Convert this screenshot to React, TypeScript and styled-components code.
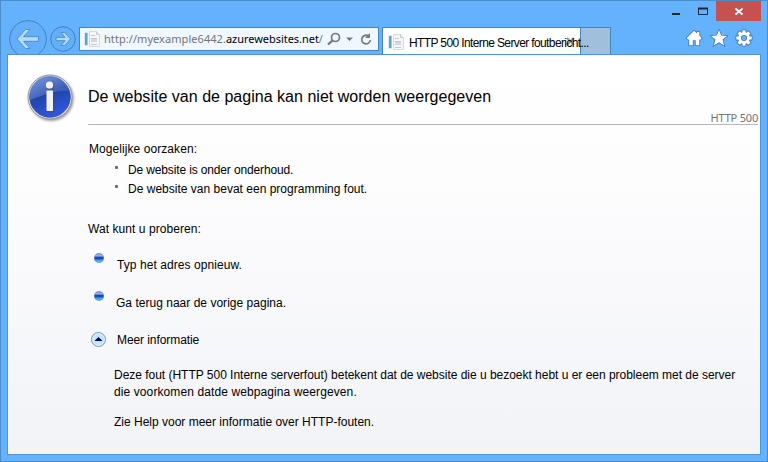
import React from "react";
import styled, { createGlobalStyle } from "styled-components";

const GlobalStyle = createGlobalStyle`
  *, *::before, *::after { box-sizing: border-box; }
  body { margin: 0; }
  p, h1, h2, ul { margin: 0; padding: 0; font-weight: normal; }
`;

const EDGE = "#4a8dc9";

const Window = styled.div`
  display: flex;
  flex-direction: column;
  width: 768px;
  height: 462px;
  padding: 0 6px 6px;
  overflow: hidden;
  background: #64b1fd;
  border: 1px solid ${EDGE};
  color: #000;
  font: 12px/16px "Liberation Sans", Arial, sans-serif;
`;

const CaptionBar = styled.div`
  display: flex;
  flex: none;
  justify-content: flex-end;
  height: 20px;
`;

const CaptionButton = styled.div<{ $width: number; $danger?: boolean }>`
  display: flex;
  width: ${(p) => p.$width}px;
  height: 20px;
  background: ${(p) => (p.$danger ? "#c75050" : "transparent")};
`;

const Toolbar = styled.div`
  display: flex;
  flex: none;
  align-items: flex-start;
  height: 34px;
  margin-top: -1px;
  padding-left: 2px;
`;

const BackButton = styled.svg`
  flex: none;
  width: 38px;
  height: 34px;
`;

const ForwardButton = styled.svg`
  flex: none;
  width: 26px;
  height: 26px;
  margin: 6px 3px 0;
`;

const AddressBar = styled.div`
  display: flex;
  flex: none;
  align-items: center;
  width: 300px;
  height: 24px;
  margin: 7px 3px 0 0;
  padding-left: 4px;
  background: #f0f7ff;
  border: 1px solid #4785bd;
`;

const DocumentSvg = styled.svg`
  flex: none;
  width: 16px;
  height: 16px;
`;

const Url = styled.span`
  width: 219px;
  margin: 0 4px 0 4px;
  overflow: hidden;
  color: #6f757b;
  font: 11px/16px "Noto Sans", sans-serif;
  letter-spacing: 0.06px;
  white-space: nowrap;
`;

const Domain = styled.span`
  color: #000;
  letter-spacing: -0.04px;
`;

const AddressTools = styled.svg`
  flex: none;
  width: 48px;
  height: 18px;
`;

const Tab = styled.div`
  display: flex;
  flex: none;
  align-items: center;
  position: relative;
  width: 199px;
  height: 27px;
  margin-top: 7px;
  padding: 1px 0 0 5px;
  background: #fff;
  border: 1px solid #4785bd;
  border-bottom: 0;
`;

const TabTitle = styled.span`
  position: relative;
  z-index: 1;
  margin: 2px 0 0 5px;
  letter-spacing: -0.62px;
  white-space: nowrap;
`;

const TabClose = styled.svg`
  position: absolute;
  top: 9px;
  right: 5px;
  width: 9px;
  height: 9px;
`;

const NewTab = styled.div`
  flex: none;
  width: 30px;
  height: 27px;
  margin-top: 7px;
  background: #9fbfdb;
  border: 1px solid #4785bd;
  border-width: 1px 1px 0 0;
`;

const Commands = styled.div`
  display: flex;
  gap: 7px;
  margin: 9px 8px 0 auto;
`;

const CommandIcon = styled.svg`
  width: 18px;
  height: 18px;
  fill: #fff;
  stroke: #4179aa;
  stroke-width: 1.6;
  paint-order: stroke;
`;

const Page = styled.main`
  display: flex;
  flex: 1;
  width: 754px;
  padding: 19px 2px 0 19px;
  background: linear-gradient(#fff, #fdfdfe 30%, #f2f3f7);
  border: 1px solid #4d95d8;
`;

const InfoIcon = styled.svg`
  flex: none;
  width: 50px;
  height: 50px;
  margin-right: 11px;
`;

const Content = styled.div`
  flex: 1;
`;

const Header = styled.header`
  display: flex;
  align-items: flex-end;
  justify-content: space-between;
  height: 51px;
  border-bottom: 1px solid #b3b7c6;
`;

const Title = styled.h1`
  font-size: 16px;
  line-height: 20px;
  letter-spacing: 0.02px;
  margin-bottom: 17px;
`;

const Status = styled.span`
  color: #737373;
  font: 11px/14px "Noto Sans", sans-serif;
  letter-spacing: -0.2px;
  margin-bottom: -1px;
`;

const Line = styled.p<{ $spacing?: number; $top?: number; $indent?: number }>`
  height: 16px;
  margin-top: ${(p) => p.$top ?? 0}px;
  padding-left: ${(p) => p.$indent ?? 0}px;
  letter-spacing: ${(p) => p.$spacing ?? 0}px;
  white-space: nowrap;
`;

const Causes = styled.ul`
  display: flex;
  flex-direction: column;
  gap: 3px;
  margin-top: 5px;
  list-style: none;
`;

const Cause = styled.li<{ $spacing: number }>`
  display: flex;
  height: 16px;
  letter-spacing: ${(p) => p.$spacing}px;
  white-space: nowrap;

  &::before {
    content: "";
    width: 3px;
    height: 3px;
    margin: 4px 10px 0 27px;
    background: #6b6b6b;
    border-radius: 1px;
  }
`;

const Action = styled.div<{ $top: number; $indent?: number; $spacing: number }>`
  display: flex;
  height: 16px;
  margin-top: ${(p) => p.$top}px;
  letter-spacing: ${(p) => p.$spacing}px;
  white-space: nowrap;

  & > span { margin-left: ${(p) => p.$indent ?? 11}px; }
`;

const Bullet = styled.i`
  width: 10px;
  height: 10px;
  margin: -4px 2px 0 6px;
  background: linear-gradient(#8b9bc0 0%, #a0b5e8 24%, #2042bc 42%, #1749c8 58%, #35a4e9 78%, #6dbdd9 100%);
  border: 1px solid rgba(110, 145, 180, 0.6);
  border-radius: 50%;
`;

const Toggle = styled.svg`
  width: 16px;
  height: 16px;
  margin: -1px 0 0 2px;
`;

function DocumentIcon() {
  return (
    <DocumentSvg viewBox="0 0 16 16">
      <path d="M5.500.5h7l3 3v12h-10z" fill="#f6f7f8" stroke="#d5d8dc" />
      <path d="M12.500.5v3h3" fill="#e6e8eb" stroke="#c9cdd2" />
      <path d="M0 1h4v14H0z" fill="#dcebf4" />
      <path d="M1 2h2.500v12H1z" fill="#5da4cc" />
      <path d="M7 4.500h4M7 7.500h6M7 10.500h6M7 13.500h6" stroke="#c5c9ce" />
      <path d="M7 8h6v3H7z" fill="#d3d7db" />
    </DocumentSvg>
  );
}

const CAUSES = [
  { text: "De website is onder onderhoud.", spacing: -0.14 },
  { text: "De website van bevat een programming fout.", spacing: 0.01 },
];

export default function App() {
  return (
    <>
      <GlobalStyle />
      <Window>
        <CaptionBar>
          <CaptionButton $width={27}>
            <svg width="27" height="20"><path d="M6 12h8v2H6z" fill="#1d2730" /></svg>
          </CaptionButton>
          <CaptionButton $width={23}>
            <svg width="23" height="20">
              <path d="M5.500 7.500h9v6h-9z" fill="none" stroke="#1d2730" />
              <path d="M5 6.500h10v2H5z" fill="#1d2730" />
            </svg>
          </CaptionButton>
          <CaptionButton $width={45} $danger>
            <svg width="45" height="20"><path d="M19.500 7.500l7 6m0-6l-7 6" stroke="#fff" strokeWidth="1.800" /></svg>
          </CaptionButton>
        </CaptionBar>

        <Toolbar>
          <BackButton viewBox="0 0 38 34">
            <circle cx="19" cy="19" r="18.300" fill="#64aff9" stroke="#4382b8" />
            <path d="M8 19l8.500-9.500h4.500l-6.500 7.200h15v4.600h-15l6.500 7.200h-4.500z" fill="#b5dcff" stroke="#4f8fc9" />
          </BackButton>
          <ForwardButton viewBox="0 0 26 26">
            <circle cx="13" cy="13" r="12.300" fill="#64aff9" stroke="#4382b8" />
            <path d="M20.500 13l-6-6.500h-3.500l4.200 4.800H6v3.400h9.200L11 19.500h3.500z" fill="#b5dcff" stroke="#4f8fc9" />
          </ForwardButton>
          <AddressBar>
            <DocumentIcon />
            <Url>http://myexample6442.<Domain>azurewebsites.net</Domain>/</Url>
            <AddressTools viewBox="0 0 48 18" fill="none" stroke="#727981">
              <circle cx="8.500" cy="7.500" r="4" strokeWidth="1.700" />
              <path d="M5.500 10.500L1 14.500" strokeWidth="2.300" />
              <path d="M19 7.500h7l-3.500 3.500z" fill="#727981" stroke="none" />
              <path d="M41.500 6a4.300 4.300 0 1 0 1.800 4" strokeWidth="1.700" />
              <path d="M43 3v5h-5z" fill="#727981" stroke="none" />
            </AddressTools>
          </AddressBar>
          <Tab>
            <DocumentIcon />
            <TabTitle>HTTP 500 Interne Server foutbericht...</TabTitle>
            <TabClose viewBox="0 0 9 9"><path d="M1 1l7 7M8 1L1 8" stroke="#9a9a9a" strokeWidth="2" /></TabClose>
          </Tab>
          <NewTab />
          <Commands>
            <CommandIcon viewBox="0 0 18 18">
              <path d="M9 1.800L1.800 9l1 1.400H4.200V16.200h3.600v-5h2.900v5h3.600v-5.800h1.400l1-1.400-2.400-2.400V3h-2.200v1.500z" />
            </CommandIcon>
            <CommandIcon viewBox="0 0 18 18">
              <path d="M9 1l2.200 5.500 5.900.4-4.600 3.700 1.600 5.900L9 13.300l-5.100 3.200 1.600-5.900L.9 6.900l5.900-.4z" />
            </CommandIcon>
            <CommandIcon viewBox="0 0 18 18">
              <path fillRule="evenodd" d="M7.500 1.300h3v1.900l1.200.5 1.500-1.500 2.300 2.300L14 6l.5 1.400h2.200v3.200h-2.200L14 12l1.500 1.500-2.300 2.300-1.500-1.500-1.200.5v1.900h-3v-1.900l-1.200-.5-1.500 1.500-2.300-2.300L4 12l-.5-1.400H1.300V7.400h2.200L4 6 2.500 4.500l2.300-2.300 1.500 1.500 1.200-.5zM9 6a3 3 0 1 0 0 6 3 3 0 0 0 0-6z" />
            </CommandIcon>
          </Commands>
        </Toolbar>

        <Page>
          <InfoIcon viewBox="0 0 50 50">
            <defs>
              <linearGradient id="ball" x1="0" y1="0" x2=".4" y2="1">
                <stop offset="0" stopColor="#5c80cb" />
                <stop offset=".5" stopColor="#1f44a5" />
                <stop offset="1" stopColor="#3155df" />
              </linearGradient>
              <linearGradient id="gloss" x1="0" y1="0" x2="1" y2="1">
                <stop offset="0" stopColor="#8eaae8" stopOpacity=".65" />
                <stop offset="1" stopColor="#5675c6" stopOpacity=".3" />
              </linearGradient>
              <filter id="shade" x="-20%" y="-20%" width="150%" height="150%">
                <feDropShadow dx="1.200" dy="1.500" stdDeviation="1.100" floodColor="#444" floodOpacity=".55" />
              </filter>
            </defs>
            <circle cx="23" cy="23" r="22" fill="#f4f4f4" stroke="#8c8e94" filter="url(#shade)" />
            <circle cx="23" cy="23" r="20.300" fill="url(#ball)" stroke="#2a468f" strokeWidth=".8" />
            <path d="M3 26.500A20 20 0 0 1 42 16.500C31 16.500 18 19.500 3 26.500z" fill="url(#gloss)" />
            <g fill="#f1f1f1" filter="url(#shade)">
              <circle cx="22.500" cy="11" r="3.600" />
              <rect x="19.500" y="16.500" width="6.500" height="20.500" rx=".8" />
            </g>
          </InfoIcon>
          <Content>
            <Header>
              <Title>De website van de pagina kan niet worden weergegeven</Title>
              <Status>HTTP 500</Status>
            </Header>
            <Line $top={16} $indent={1} $spacing={0.07}>Mogelijke oorzaken:</Line>
            <Causes>
              {CAUSES.map((c) => <Cause key={c.text} $spacing={c.spacing}>{c.text}</Cause>)}
            </Causes>
            <Line $top={24} $spacing={0.07}>Wat kunt u proberen:</Line>
            <Action $top={20} $spacing={0.07}><Bullet /><span>Typ het adres opnieuw.</span></Action>
            <Action $top={22} $indent={10} $spacing={0.02}><Bullet /><span>Ga terug naar de vorige pagina.</span></Action>
            <Action $top={21} $spacing={-0.08}>
              <Toggle viewBox="0 0 16 16">
                <circle cx="8.500" cy="8.500" r="7" fill="#c4e5f8" stroke="#7592bf" />
                <circle cx="8.500" cy="8.500" r="5.800" fill="none" stroke="#e4f5ff" />
                <path d="M4.500 10l4-4 4 4z" fill="#000b55" />
              </Toggle>
              <span>Meer informatie</span>
            </Action>
            <Line $top={19} $indent={26} $spacing={-0.02}>
              Deze fout (HTTP 500 Interne serverfout) betekent dat de website die u bezoekt hebt u er een probleem met de server
            </Line>
            <Line $top={1} $indent={26} $spacing={0.1}>die voorkomen datde webpagina weergeven.</Line>
            <Line $top={14} $indent={26}>Zie Help voor meer informatie over HTTP-fouten.</Line>
          </Content>
        </Page>
      </Window>
    </>
  );
}
